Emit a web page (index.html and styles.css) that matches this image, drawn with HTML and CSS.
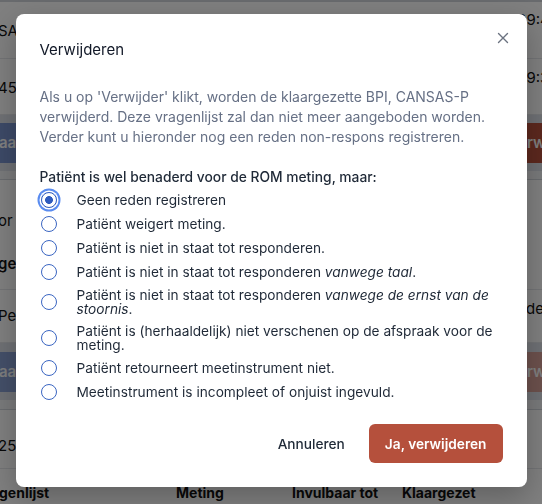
FILE: index.html
```html
<!DOCTYPE html>
<html lang="nl">
<head>
<meta charset="utf-8">
<title>Verwijderen</title>
<link rel="stylesheet" href="styles.css">
</head>
<body>
<div class="page">
  <div class="topline"></div>
  <div class="row row-a"><span class="cell-l">SAS-P</span><span class="cell-r">09:45</span></div>
  <div class="row row-b"><span class="cell-l">45</span><span class="cell-r">09:30</span></div>
  <div class="foot"><span class="btn-l">aarzetten</span><span class="clip-r"><span class="btn-r">Verwijderen</span></span></div>
  <div class="gap"></div>
  <div class="row row-c"><span class="cell-l stack"><span>or</span><span class="bold">ge</span></span><span class="cell-r"></span></div>
  <div class="row row-d"><span class="cell-l">Pe</span><span class="cell-r">ode</span></div>
  <div class="foot foot-off"><span class="btn-l">aarzetten</span><span class="clip-r"><span class="btn-r">Verwijderen</span></span></div>
  <div class="gap gap-b"></div>
  <div class="row row-e"><span class="cell-l">25</span><span class="cell-r"></span></div>
  <div class="thead"><span>genlijst</span><span>Meting</span><span>Invulbaar tot</span><span>Klaargezet</span></div>
</div>

<div class="overlay">
  <div class="modal" role="dialog" aria-labelledby="mtitle">
    <button class="close" aria-label="Sluiten">
      <svg width="12" height="12" viewBox="0 0 12 12"><path d="M1.5 1.5l9 9M10.5 1.5l-9 9" stroke="currentColor" stroke-width="1.4" stroke-linecap="round" fill="none"/></svg>
    </button>
    <h2 class="title" id="mtitle">Verwijderen</h2>
    <p class="desc">Als u op 'Verwijder' klikt, worden de klaargezette BPI, CANSAS-P verwijderd. Deze vragenlijst zal dan niet meer aangeboden worden. Verder kunt u hieronder nog een reden non-respons registreren.</p>
    <p class="question">Patiënt is wel benaderd voor de ROM meting, maar:</p>
    <div class="options">
      <label class="opt"><input type="radio" name="reden" class="radio" checked><span>Geen reden registreren</span></label>
      <label class="opt"><input type="radio" name="reden" class="radio"><span>Patiënt weigert meting.</span></label>
      <label class="opt"><input type="radio" name="reden" class="radio"><span>Patiënt is niet in staat tot responderen.</span></label>
      <label class="opt"><input type="radio" name="reden" class="radio"><span>Patiënt is niet in staat tot responderen <em>vanwege taal</em>.</span></label>
      <label class="opt"><input type="radio" name="reden" class="radio"><span>Patiënt is niet in staat tot responderen <em>vanwege de ernst van de stoornis</em>.</span></label>
      <label class="opt"><input type="radio" name="reden" class="radio"><span>Patiënt is (herhaaldelijk) niet verschenen op de afspraak voor de meting.</span></label>
      <label class="opt"><input type="radio" name="reden" class="radio"><span>Patiënt retourneert meetinstrument niet.</span></label>
      <label class="opt"><input type="radio" name="reden" class="radio"><span>Meetinstrument is incompleet of onjuist ingevuld.</span></label>
    </div>
    <div class="actions">
      <button class="btn btn-ghost">Annuleren</button>
      <button class="btn btn-danger">Ja, verwijderen</button>
    </div>
  </div>
</div>
</body>
</html>
```
FILE: styles.css
```css
* { box-sizing: border-box; }
html, body { margin: 0; }
body {
  width: 542px;
  height: 504px;
  overflow: hidden;
  background: #f3f4f6;
  font-family: Inter, "Noto Sans", sans-serif;
}

/* background page */
.page { display: flex; flex-direction: column; font-size: 15px; line-height: 20px; color: #111; }
.topline { height: 2px; background: #d1d5db; }
.row {
  display: flex;
  justify-content: space-between;
  align-items: flex-start;
  background: #fff;
  border-bottom: 1px solid #e5e7eb;
}
.cell-l { margin-left: -2px; white-space: nowrap; }
.cell-r { width: 25px; white-space: nowrap; overflow: hidden; }
.row-a { height: 57px; }
.row-a .cell-l { padding-top: 19px; }
.row-a .cell-r { padding-top: 8px; }
.row-b { height: 56px; }
.row-b .cell-l { padding-top: 19px; }
.row-b .cell-r { padding-top: 9px; }
.foot {
  height: 56px;
  padding: 8px 0;
  background: #dde1e9;
  display: flex;
  justify-content: space-between;
}
.btn-l, .btn-r {
  height: 40px;
  display: flex;
  align-items: center;
  color: #fff;
  font-weight: 600;
  white-space: nowrap;
}
.btn-l { background: #7a94cf; padding: 0 16px 0 0; margin-left: -1px; border-radius: 0 6px 6px 0; }
.clip-r { width: 34px; overflow: hidden; display: flex; }
.btn-r { background: #b9513d; padding: 0 16px; border-radius: 6px; margin-left: -16px; }
.foot-off { height: 57px; padding: 9px 0 8px; }
.foot-off .btn-l { opacity: .85; }
.foot-off .btn-r { background: #d9a29a; }
.gap { height: 9px; border-bottom: 1px solid #d1d5db; }
.gap-b { height: 10px; }
.row-c { height: 110px; }
.row-c .stack { display: flex; flex-direction: column; gap: 23px; padding-top: 31px; }
.bold { font-weight: 600; }
.row-d { height: 53px; }
.row-d .cell-l { padding-top: 16px; }
.row-d .cell-r { padding-top: 9px; }
.row-e { height: 59px; }
.row-e .cell-l { padding-top: 26px; }
.thead {
  display: grid;
  grid-template-columns: 177px 116px 110px 1fr;
  background: #fff;
  font-size: 14px;
  font-weight: 700;
  padding-top: 14px;
  height: 40px;
  margin-left: -1px;
  white-space: nowrap;
}

/* overlay + modal */
.overlay {
  position: fixed;
  inset: 0;
  background: rgba(0, 0, 0, 0.5);
  display: flex;
  align-items: flex-start;
  justify-content: center;
  padding-top: 14px;
}
.modal {
  position: relative;
  width: 511px;
  background: #fff;
  border-radius: 8px;
  padding: 24px;
  box-shadow: 0 10px 30px rgba(0, 0, 0, 0.25);
  color: #1f2937;
}
.close {
  position: absolute;
  top: 14px;
  right: 14px;
  width: 20px;
  height: 20px;
  padding: 0;
  border: 0;
  background: none;
  color: #6b7280;
  display: flex;
  align-items: center;
  justify-content: center;
}
.title {
  margin: 0 0 25px;
  font-size: 15px;
  line-height: 24px;
  font-weight: 400;
  color: #111827;
}
.desc {
  margin: 0 0 20px;
  font-size: 14px;
  line-height: 20px;
  color: #667085;
}
.question {
  margin: 0 0 5px;
  font-size: 13.8px;
  line-height: 20px;
  font-weight: 500;
  color: #1f2937;
}
.options { display: flex; flex-direction: column; gap: 8px; padding-left: 1px; }
.opt {
  display: flex;
  align-items: center;
  gap: 20px;
  font-size: 13.7px;
  line-height: 14px;
  color: #1f2937;
}
.radio {
  appearance: none;
  -webkit-appearance: none;
  flex: none;
  margin: 0;
  width: 16px;
  height: 16px;
  border: 1px solid #3b66c2;
  border-radius: 50%;
  background: #fff;
}
.radio:checked {
  border-color: #2f5cbf;
  background: radial-gradient(circle, #2f5cbf 0 3.6px, #fff 4.2px);
  box-shadow: 0 0 0 1.5px #fff, 0 0 0 3.5px #5a8cf0;
}
.actions {
  display: flex;
  justify-content: flex-end;
  gap: 8px;
  margin-top: 24px;
}
.btn {
  height: 39px;
  padding: 0 16px;
  border: 0;
  border-radius: 6px;
  font-family: inherit;
  font-size: 13.7px;
  font-weight: 600;
}
.btn-ghost { background: none; color: #1f2937; font-weight: 500; }
.btn-danger { background: #b5503c; color: #fff; }
```
